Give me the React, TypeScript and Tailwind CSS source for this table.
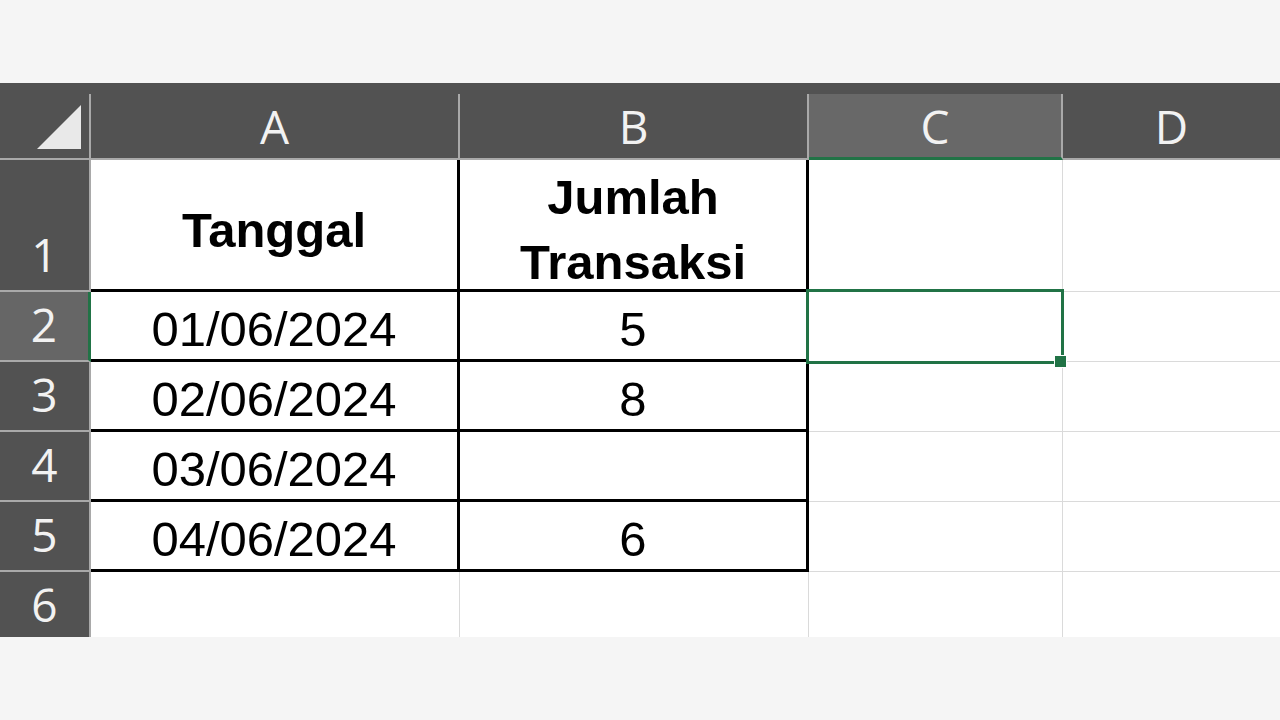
const COLS = ["A", "B", "C", "D"];

const ROWS: { n: number; h: string; a: string; b: string }[] = [
  { n: 1, h: "h-[132px]", a: "", b: "" },
  { n: 2, h: "h-[70px]", a: "01/06/2024", b: "5" },
  { n: 3, h: "h-[70px]", a: "02/06/2024", b: "8" },
  { n: 4, h: "h-[70px]", a: "03/06/2024", b: "" },
  { n: 5, h: "h-[70px]", a: "04/06/2024", b: "6" },
  { n: 6, h: "h-[70px]", a: "", b: "" },
];

const dataFont = "font-['Liberation_Sans',Arial,sans-serif] text-[49px] text-black";
const headFont = "font-['Open_Sans','Noto_Sans',sans-serif] text-[46px] leading-none text-[#f2f2f2]";

function ColumnHeader({
  label,
  width,
  active,
  last,
}: {
  label: string;
  width: string;
  active?: boolean;
  last?: boolean;
}) {
  return (
    <div className={`${width} h-full pt-[11px]`}>
      <div
        className={`flex h-full items-center justify-center ${last ? "" : "border-r-2 border-r-[#a9a9a9]"} ${
          active ? "border-b-[3px] border-b-[#217346] bg-[#686868]" : "border-b-2 border-b-[#a9a9a9]"
        } ${headFont}`}
      >
        {label}
      </div>
    </div>
  );
}

function RowHeader({ n, active }: { n: number; active?: boolean }) {
  return (
    <div
      className={`flex h-full w-[91px] shrink-0 items-end justify-center border-b-2 border-b-[#a9a9a9] pb-[13px] ${
        active ? "border-r-[3px] border-r-[#217346] bg-[#666666]" : "border-r-2 border-r-[#a9a9a9] bg-[#525252]"
      } ${headFont}`}
    >
      {n}
    </div>
  );
}

export default function App() {
  return (
    <div className="flex h-[720px] w-[1280px] flex-col bg-[#f5f5f5]">
      <div className="h-[83px] shrink-0" />

      <div className="h-[554px] shrink-0 overflow-hidden bg-white">
        {/* column headers */}
        <div className="flex h-[77px] bg-[#525252]">
          <div className="h-full w-[91px] shrink-0 pt-[11px]">
            <div className="h-full border-r-2 border-b-2 border-[#a9a9a9]">
              <svg width="89" height="64" viewBox="0 0 89 64">
                <polygon points="81,11 37,55 81,55" fill="#e9e9e9" />
              </svg>
            </div>
          </div>
          <ColumnHeader label={COLS[0]} width="w-[369px] shrink-0" />
          <ColumnHeader label={COLS[1]} width="w-[349px] shrink-0" />
          <ColumnHeader label={COLS[2]} width="w-[254px] shrink-0" active />
          <ColumnHeader label={COLS[3]} width="flex-1" last />
        </div>

        {ROWS.map((r) => {
          const boxed = r.n <= 5;
          const edge = boxed
            ? "border-r-[3px] border-b-[3px] border-black"
            : "border-r border-[#dadada]";
          const align =
            r.n === 1 ? "items-center pt-[11px]" : "items-end pb-[5px]";
          return (
            <div key={r.n} className={`flex shrink-0 ${r.h}`}>
              <RowHeader n={r.n} active={r.n === 2} />

              <div className={`flex w-[369px] shrink-0 justify-center ${align} ${edge} ${dataFont} leading-none`}>
                {r.n === 1 ? <span className="font-bold">Tanggal</span> : r.a}
              </div>

              <div className={`flex w-[349px] shrink-0 justify-center ${align} ${edge} ${dataFont} leading-none`}>
                {r.n === 1 ? (
                  <span className="text-center font-bold leading-[65px]">
                    Jumlah
                    <br />
                    Transaksi
                  </span>
                ) : (
                  r.b
                )}
              </div>

              <div className="relative w-[254px] shrink-0 border-r border-b border-[#dadada]">
                {r.n === 2 && (
                  <>
                    <div className="absolute -top-[3px] -left-[3px] -right-[2px] -bottom-[3px] z-10 border-[3px] border-[#217346]" />
                    <div className="absolute -right-[5px] -bottom-[7px] z-20 h-[13px] w-[13px] border border-white bg-[#217346]" />
                  </>
                )}
              </div>

              <div className="flex-1 border-b border-[#dadada]" />
            </div>
          );
        })}
      </div>

      <div className="flex-1" />
    </div>
  );
}
